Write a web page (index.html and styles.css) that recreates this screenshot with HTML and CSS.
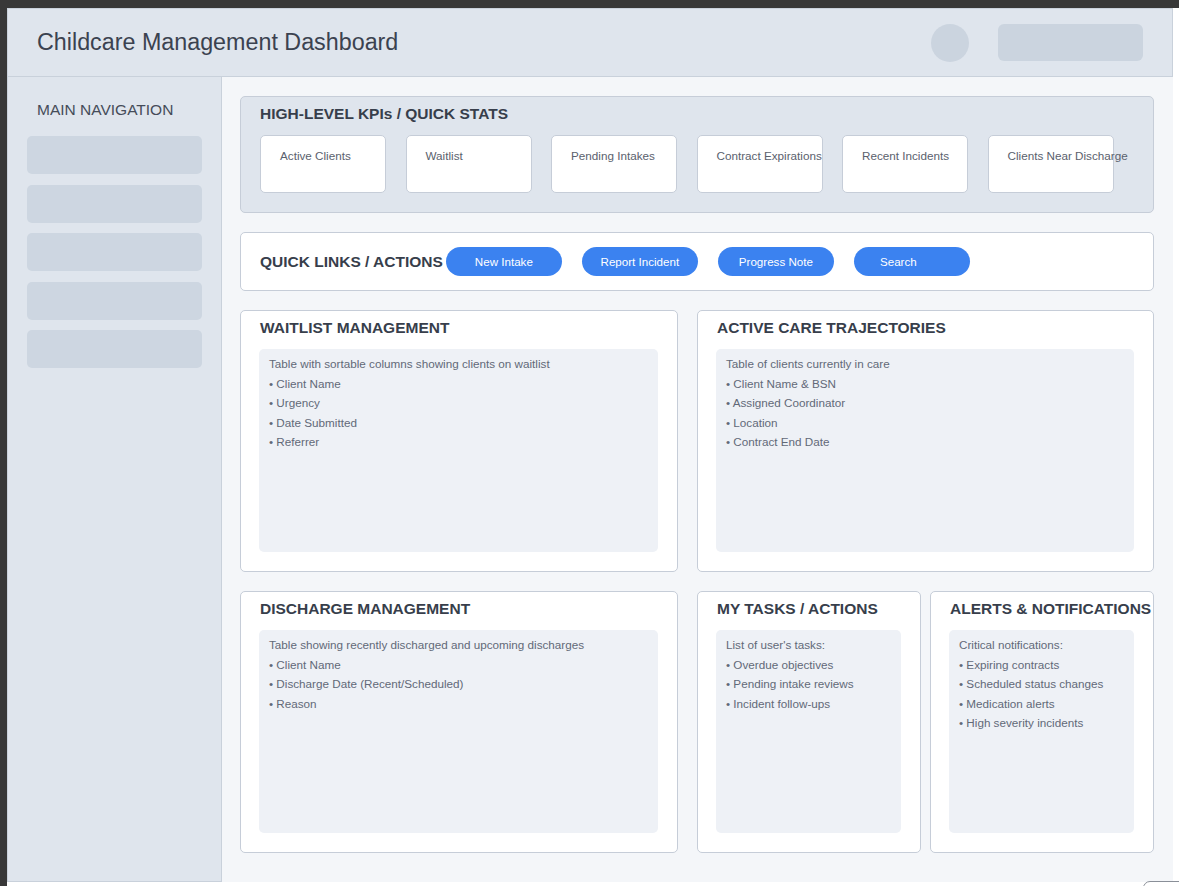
FILE: index.html
```html
<!DOCTYPE html>
<html lang="en">
<head>
<meta charset="utf-8">
<title>Childcare Management Dashboard</title>
<link rel="stylesheet" href="styles.css">
</head>
<body>
<div class="frame">
  <div class="app">
    <header class="topbar">
      <h1 class="app-title">Childcare Management Dashboard</h1>
      <div class="topbar-right">
        <div class="avatar"></div>
        <div class="user-pill"></div>
      </div>
    </header>
    <div class="layout">
      <aside class="sidebar">
        <h2 class="sidebar-title">MAIN NAVIGATION</h2>
        <nav class="nav">
          <div class="nav-item"></div>
          <div class="nav-item"></div>
          <div class="nav-item"></div>
          <div class="nav-item"></div>
          <div class="nav-item"></div>
        </nav>
      </aside>
      <main class="main">
        <section class="kpi-panel">
          <h3 class="panel-title">HIGH-LEVEL KPIs / QUICK STATS</h3>
          <div class="kpi-row">
            <div class="kpi-card">Active Clients</div>
            <div class="kpi-card">Waitlist</div>
            <div class="kpi-card">Pending Intakes</div>
            <div class="kpi-card">Contract Expirations</div>
            <div class="kpi-card">Recent Incidents</div>
            <div class="kpi-card">Clients Near Discharge</div>
          </div>
        </section>

        <section class="links-panel">
          <h3 class="panel-title links-title">QUICK LINKS / ACTIONS</h3>
          <div class="btn-row">
            <button class="pill-btn">New Intake</button>
            <button class="pill-btn">Report Incident</button>
            <button class="pill-btn">Progress Note</button>
            <button class="pill-btn pill-btn-search">Search</button>
          </div>
        </section>

        <div class="grid">
          <section class="card">
            <h3 class="card-title">WAITLIST MANAGEMENT</h3>
            <div class="card-body">
              <div>Table with sortable columns showing clients on waitlist</div>
              <div>• Client Name</div>
              <div>• Urgency</div>
              <div>• Date Submitted</div>
              <div>• Referrer</div>
            </div>
          </section>
          <section class="card">
            <h3 class="card-title">ACTIVE CARE TRAJECTORIES</h3>
            <div class="card-body">
              <div>Table of clients currently in care</div>
              <div>• Client Name &amp; BSN</div>
              <div>• Assigned Coordinator</div>
              <div>• Location</div>
              <div>• Contract End Date</div>
            </div>
          </section>
          <section class="card">
            <h3 class="card-title">DISCHARGE MANAGEMENT</h3>
            <div class="card-body">
              <div>Table showing recently discharged and upcoming discharges</div>
              <div>• Client Name</div>
              <div>• Discharge Date (Recent/Scheduled)</div>
              <div>• Reason</div>
            </div>
          </section>
          <div class="split">
            <section class="card">
              <h3 class="card-title">MY TASKS / ACTIONS</h3>
              <div class="card-body">
                <div>List of user's tasks:</div>
                <div>• Overdue objectives</div>
                <div>• Pending intake reviews</div>
                <div>• Incident follow-ups</div>
              </div>
            </section>
            <section class="card">
              <h3 class="card-title">ALERTS &amp; NOTIFICATIONS</h3>
              <div class="card-body">
                <div>Critical notifications:</div>
                <div>• Expiring contracts</div>
                <div>• Scheduled status changes</div>
                <div>• Medication alerts</div>
                <div>• High severity incidents</div>
              </div>
            </section>
          </div>
        </div>
      </main>
    </div>
  </div>
  <div class="corner-tab"></div>
</div>
</body>
</html>
```

FILE: styles.css
```css
* { box-sizing: border-box; }

html, body {
  margin: 0;
  padding: 0;
  background: #ffffff;
  font-family: "Liberation Sans", Arial, sans-serif;
  color: #3a414e;
}

.frame {
  position: relative;
  width: 1179px;
  height: 886px;
  overflow: hidden;
  border-top: 8px solid #383838;
  border-left: 7px solid #383838;
  background: #ffffff;
}

.app {
  width: 1166px;
  height: 874px;
  display: flex;
  flex-direction: column;
  background: #f4f6f9;
}

/* Header */
.topbar {
  height: 69px;
  flex: none;
  display: flex;
  align-items: center;
  justify-content: space-between;
  padding: 0 29px 0 29px;
  background: #dfe5ed;
  border: 1px solid #c9d1db;
}

.app-title {
  margin: 0;
  font-size: 23.3px;
  font-weight: normal;
  color: #3b4250;
}

.topbar-right {
  display: flex;
  align-items: center;
  gap: 29px;
}

.avatar {
  width: 38px;
  height: 38px;
  border-radius: 50%;
  background: #cbd4df;
}

.user-pill {
  width: 145px;
  height: 37px;
  border-radius: 6px;
  background: #cbd4df;
}

/* Layout */
.layout {
  flex: 1;
  display: flex;
  min-height: 0;
}

.sidebar {
  width: 215px;
  flex: none;
  background: #dfe5ed;
  border: 1px solid #c9d1db;
  border-top: none;
  padding: 20px 19px 0 19px;
}

.sidebar-title {
  margin: 4px 0 0 10px;
  font-size: 15.5px;
  font-weight: normal;
  color: #454c59;
  line-height: 18px;
}

.nav {
  margin-top: 17px;
  display: flex;
  flex-direction: column;
  gap: 10.5px;
}

.nav-item {
  height: 38px;
  border-radius: 5px;
  background: #cdd6e1;
}

/* Main */
.main {
  flex: 1;
  padding: 19px 19px 0 18px;
  display: flex;
  flex-direction: column;
}

.panel-title {
  margin: 0;
  font-size: 15.5px;
  font-weight: bold;
  color: #373e4b;
  line-height: 18px;
  white-space: nowrap;
}

.kpi-panel {
  height: 117px;
  background: #dfe5ed;
  border: 1px solid #c6cdd8;
  border-radius: 5px;
  padding: 8px 19px 0 19px;
}

.kpi-row {
  margin-top: 12px;
  display: flex;
  gap: 19.5px;
}

.kpi-card {
  width: 126px;
  height: 58px;
  flex: none;
  background: #ffffff;
  border: 1px solid #c6cdd8;
  border-radius: 5px;
  padding: 12px 0 0 19px;
  font-size: 11.7px;
  line-height: 15px;
  color: #5a616d;
  white-space: nowrap;
}

.links-panel {
  margin-top: 19px;
  height: 59px;
  background: #ffffff;
  border: 1px solid #c6cdd8;
  border-radius: 5px;
  padding: 0 19px;
  display: flex;
  align-items: center;
}

.links-title {
  margin-right: 3px;
}

.btn-row {
  display: flex;
  gap: 20px;
}

.pill-btn {
  width: 116px;
  height: 29px;
  border: none;
  border-radius: 15px;
  background: #3b82f0;
  color: #ffffff;
  font-family: "Liberation Sans", Arial, sans-serif;
  font-size: 11.6px;
  padding: 0;
  text-align: center;
  cursor: pointer;
}

.pill-btn-search {
  padding-right: 27px;
}

/* Grid */
.grid {
  margin-top: 19px;
  display: grid;
  grid-template-columns: 438px 457px;
  grid-template-rows: 262px 262px;
  column-gap: 19px;
  row-gap: 19px;
}

.split {
  display: grid;
  grid-template-columns: 1fr 1fr;
  column-gap: 9px;
}

.card {
  background: #ffffff;
  border: 1px solid #c6cdd8;
  border-radius: 5px;
  padding: 7px 19px 19px 18px;
  display: flex;
  flex-direction: column;
  min-width: 0;
}

.card-title {
  margin: 0 0 0 1px;
  font-size: 15.5px;
  font-weight: bold;
  color: #373e4b;
  line-height: 19px;
  white-space: nowrap;
}

.card-body {
  flex: 1;
  margin-top: 12px;
  background: #eef1f6;
  border-radius: 5px;
  padding: 5px 10px;
  font-size: 11.7px;
  line-height: 19.5px;
  color: #626978;
}

.corner-tab {
  position: absolute;
  left: 1136px;
  top: 873px;
  width: 60px;
  height: 30px;
  border: 1px solid #8a8f98;
  border-radius: 7px;
  background: #ffffff;
}
```
